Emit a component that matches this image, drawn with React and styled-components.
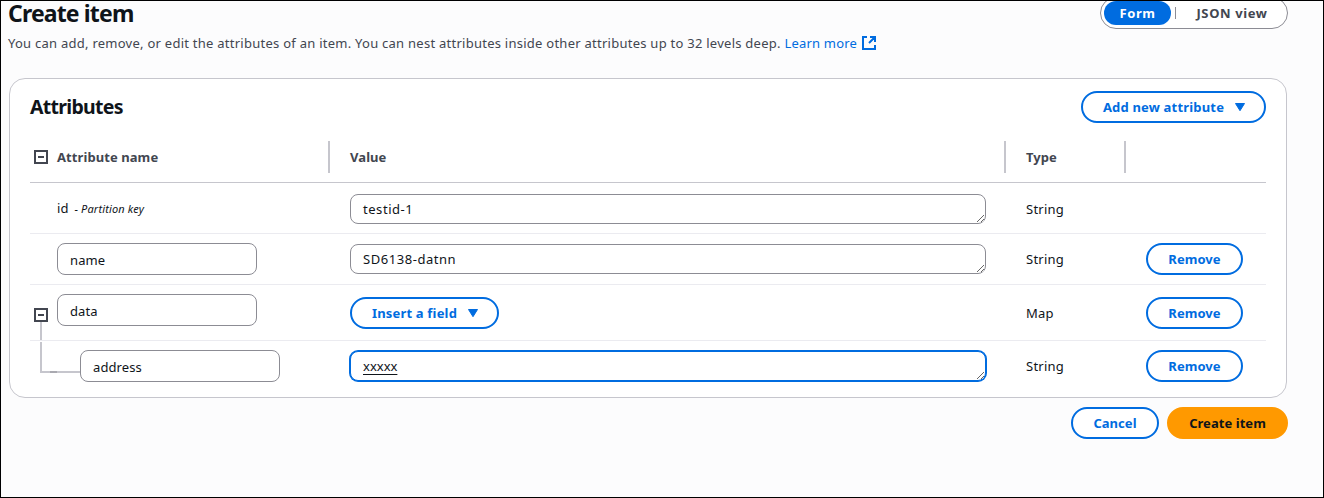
import React from 'react';
import styled, { createGlobalStyle } from 'styled-components';

const blue = '#006ce0';

const GlobalStyle = createGlobalStyle`
  *, *::before, *::after { box-sizing: border-box; }
  body { margin: 0; }
  body, button, input, textarea {
    font-family: 'Noto Sans', 'Open Sans', sans-serif;
    font-size: 13px;
    line-height: 20px;
    letter-spacing: 0.25px;
    color: #0f141a;
  }
`;

const Page = styled.div`
  height: 498px;
  border: 1px solid #000;
  background: #fcfcfd;
  overflow: hidden;
  padding: 0 35px 0 7px;
`;

const PageHeader = styled.header`
  display: flex;
  justify-content: space-between;
  align-items: flex-start;
  height: 77px;
`;

const Title = styled.h1`
  margin: 0;
  font-size: 23px;
  line-height: 25px;
  font-weight: 700;
  letter-spacing: -0.85px;
`;

const Description = styled.p`
  margin: 7px 0 0;
  color: #424650;
  white-space: nowrap;
  letter-spacing: 0.255px;
`;

const LearnMore = styled.a`
  display: inline-flex;
  align-items: center;
  gap: 5px;
  color: ${blue};
  letter-spacing: 0.2px;
`;

const Segments = styled.div`
  display: flex;
  align-items: center;
  width: 188px;
  height: 32px;
  margin-top: -4px;
  padding: 0 3px;
  border: 1px solid #8c8c94;
  border-radius: 16px;
  background: #fff;
`;

const Segment = styled.button`
  height: 24px;
  width: ${(p) => p.$width}px;
  padding: 0;
  border: 0;
  border-radius: 12px;
  font-weight: 700;
  letter-spacing: 0.6px;
  background: ${(p) => (p.$active ? blue : 'transparent')};
  color: ${(p) => (p.$active ? '#fff' : '#424650')};
`;

const SegmentDivider = styled.span`
  width: 1px;
  height: 12px;
  margin: 0 4px;
  background: #8c8c94;
`;

const Card = styled.section`
  width: 1278px;
  height: 320px;
  margin-left: 1px;
  padding: 0 20px;
  border: 1px solid #c6c6cd;
  border-radius: 16px;
  background: #fff;
`;

const CardHeader = styled.div`
  display: flex;
  align-items: center;
  justify-content: space-between;
  height: 56px;
`;

const CardTitle = styled.h2`
  margin: 0;
  font-size: 19.5px;
  line-height: 24px;
  font-weight: 700;
  letter-spacing: -0.7px;
`;

const Button = styled.button`
  display: flex;
  align-items: center;
  justify-content: center;
  gap: ${(p) => p.$gap || 0}px;
  flex: none;
  width: ${(p) => p.$width}px;
  height: 32px;
  padding: 0 0 0 ${(p) => (p.$gap ? 2 : 0)}px;
  border: 2px solid ${(p) => (p.$primary ? '#ff9900' : blue)};
  border-radius: 16px;
  background: ${(p) => (p.$primary ? '#ff9900' : '#fff')};
  color: ${(p) => (p.$primary ? '#0f141a' : blue)};
  font-weight: 700;
  letter-spacing: ${(p) => (p.$gap ? 0.18 : 0.05)}px;
  white-space: nowrap;
`;

const Row = styled.div`
  display: grid;
  grid-template-columns: 300px 676px 120px 140px;
  height: ${(p) => p.$height}px;
  border-bottom: ${(p) => (p.$last ? '0' : '1px solid #ebebf0')};
`;

const HeadRow = styled(Row)`
  align-items: start;
  padding-top: 6px;
  border-bottom-color: #c6c6cd;
`;

const HeadCell = styled.div`
  display: flex;
  align-items: center;
  gap: 9px;
  height: 32px;
  padding-left: ${(p) => (p.$first ? 4 : 20)}px;
  border-right: ${(p) => (p.$last ? '0' : '2px solid #c6c6cd')};
  color: #424650;
  font-weight: 700;
  letter-spacing: 0.08px;
`;

const Cell = styled.div`
  padding: ${(p) => p.$top}px 20px 0;
`;

const NameCell = styled.div`
  display: flex;
  align-items: flex-start;
  padding: ${(p) => p.$top}px 0 0 ${(p) => p.$left}px;
`;

const KeyNote = styled.em`
  margin-left: 2px;
  font-size: 11px;
  letter-spacing: 0.15px;
`;

const Field = styled.input`
  display: block;
  width: 200px;
  height: 32px;
  padding: 2px 12px 0;
  border: 1px solid #8c8c94;
  border-radius: 8px;
  outline: 0;
  background: #fff;
  letter-spacing: 0.1px;
`;

const ValueArea = styled.textarea`
  display: block;
  width: 636px;
  height: 30px;
  padding: 4px 12px;
  border: 1px solid ${(p) => (p.$focused ? blue : '#8c8c94')};
  border-radius: 8px;
  outline: 0;
  background: #fff;
  box-shadow: ${(p) => (p.$focused ? `0 0 0 1px ${blue}` : 'none')};
  letter-spacing: ${(p) => (p.$focused ? 0 : 0.55)}px;
  text-decoration: ${(p) => (p.$focused ? 'underline' : 'none')};
  text-underline-offset: 3px;
  overflow: hidden;
  resize: vertical;
`;

const Toggle = styled.div`
  position: relative;
  flex: none;
  width: 14px;
  height: 14px;
  margin: 14px 9px 0 0;
`;

const Branch = styled.svg`
  position: absolute;
  left: 6px;
  top: 14px;
`;

const Footer = styled.footer`
  display: flex;
  justify-content: flex-end;
  gap: 8px;
  margin-top: 9px;
`;

const Icon = styled.svg`
  display: block;
  flex: none;
`;

function Minus() {
  return (
    <Icon width="14" height="14" viewBox="0 0 14 14" fill="none" stroke="#424650">
      <rect x="1" y="1" width="12" height="12" strokeWidth="2" />
      <path d="M4 7h6" strokeWidth="2" />
    </Icon>
  );
}

function Caret() {
  return (
    <Icon width="12" height="10" viewBox="0 0 12 10">
      <path d="M1.5 1.5h9L6 8.7z" fill={blue} stroke={blue} strokeWidth="1" strokeLinejoin="round" />
    </Icon>
  );
}

function External() {
  return (
    <Icon width="14" height="14" viewBox="0 0 14 14" fill="none" stroke={blue} strokeWidth="2">
      <path d="M5 1H1v12h12V9M8 1h5v5M13 1L7 7" />
    </Icon>
  );
}

export default function App() {
  return (
    <>
      <GlobalStyle />
      <Page>
        <PageHeader>
          <div>
            <Title>Create item</Title>
            <Description>
              You can add, remove, or edit the attributes of an item. You can nest attributes inside other attributes up to 32 levels deep.{' '}
              <LearnMore>Learn more <External /></LearnMore>
            </Description>
          </div>
          <Segments>
            <Segment $active $width={67}>Form</Segment>
            <SegmentDivider />
            <Segment $width={104}>JSON view</Segment>
          </Segments>
        </PageHeader>

        <Card>
          <CardHeader>
            <CardTitle>Attributes</CardTitle>
            <Button $width={185} $gap={10}>Add new attribute <Caret /></Button>
          </CardHeader>

          <HeadRow $height={48}>
            <HeadCell $first><Minus />Attribute name</HeadCell>
            <HeadCell>Value</HeadCell>
            <HeadCell>Type</HeadCell>
            <HeadCell $last />
          </HeadRow>

          <Row $height={51}>
            <NameCell $left={27} $top={15}><span>id <KeyNote>- Partition key</KeyNote></span></NameCell>
            <Cell $top={11}><ValueArea defaultValue="testid-1" spellCheck={false} /></Cell>
            <Cell $top={16}>String</Cell>
          </Row>

          <Row $height={51}>
            <NameCell $left={27} $top={9}><Field defaultValue="name" /></NameCell>
            <Cell $top={10}><ValueArea defaultValue="SD6138-datnn" spellCheck={false} /></Cell>
            <Cell $top={15}>String</Cell>
            <Cell $top={9}><Button $width={97}>Remove</Button></Cell>
          </Row>

          <Row $height={56}>
            <NameCell $left={4} $top={9}>
              <Toggle>
                <Minus />
                <Branch width="40" height="52" viewBox="0 0 40 52" fill="none">
                  <path d="M1 0V18M1 20V50H40" stroke="#c6c6cd" strokeWidth="2" />
                  <path d="M10 50H17" stroke="#a9a9b0" strokeWidth="2" />
                </Branch>
              </Toggle>
              <Field defaultValue="data" />
            </NameCell>
            <Cell $top={12}><Button $width={149} $gap={10}>Insert a field <Caret /></Button></Cell>
            <Cell $top={18}>Map</Cell>
            <Cell $top={12}><Button $width={97}>Remove</Button></Cell>
          </Row>

          <Row $height={56} $last>
            <NameCell $left={50} $top={9}><Field defaultValue="address" /></NameCell>
            <Cell $top={10}><ValueArea $focused defaultValue="xxxxx" spellCheck={false} /></Cell>
            <Cell $top={15}>String</Cell>
            <Cell $top={9}><Button $width={97}>Remove</Button></Cell>
          </Row>
        </Card>

        <Footer>
          <Button $width={88}>Cancel</Button>
          <Button $width={121} $primary>Create item</Button>
        </Footer>
      </Page>
    </>
  );
}
